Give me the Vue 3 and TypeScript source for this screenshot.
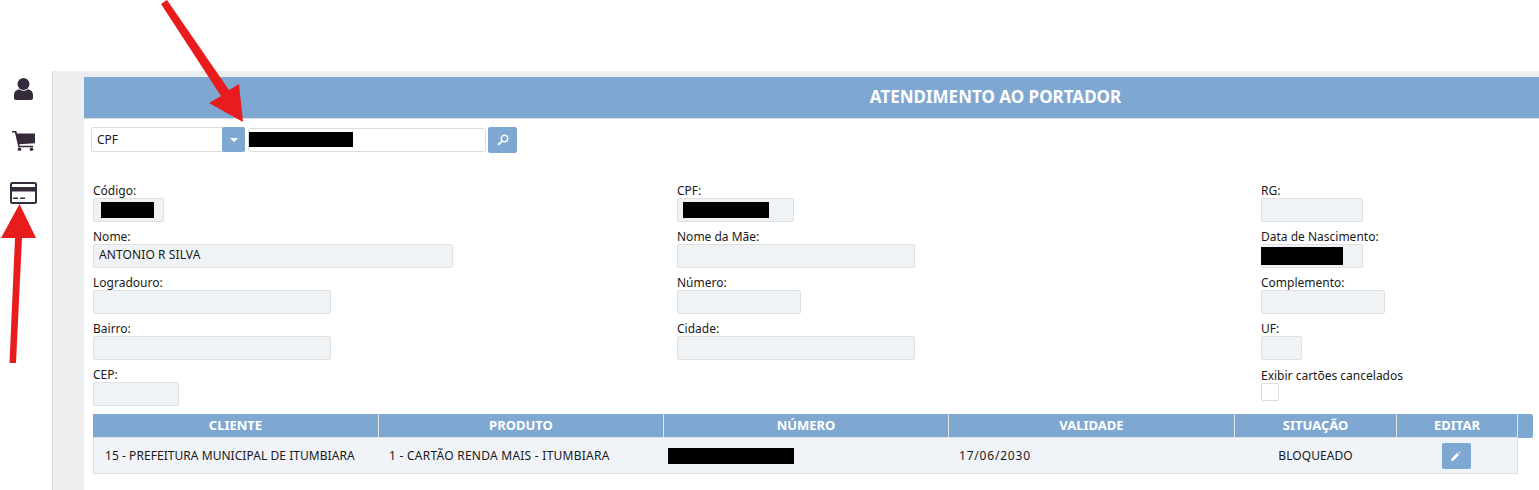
<script setup lang="ts">
interface Field {
  label: string;
  width: number;
  value?: string;
  mask?: number;
  maskLeft?: number;
  maskHeight?: number;
}

const fields: Field[] = [
  { label: 'Código:', width: 71, mask: 53, maskLeft: 2 },
  { label: 'CPF:', width: 117, mask: 86 },
  { label: 'RG:', width: 102 },
  { label: 'Nome:', width: 360, value: 'ANTONIO R SILVA' },
  { label: 'Nome da Mãe:', width: 238 },
  { label: 'Data de Nascimento:', width: 102, mask: 82, maskLeft: -6, maskHeight: 18 },
  { label: 'Logradouro:', width: 238 },
  { label: 'Número:', width: 124 },
  { label: 'Complemento:', width: 124 },
  { label: 'Bairro:', width: 238 },
  { label: 'Cidade:', width: 238 },
  { label: 'UF:', width: 41 },
  { label: 'CEP:', width: 86 },
];

const columns = ['CLIENTE', 'PRODUTO', 'NÚMERO', 'VALIDADE', 'SITUAÇÃO', 'EDITAR'];
</script>

<template>
  <div class="page">
    <aside class="rail">
      <svg class="rail-icon" viewBox="0 0 19 22" width="19" height="22">
        <circle cx="9.500" cy="6" r="6" />
        <path d="M2 22c-1.100 0-2-.9-2-2v-3.500c0-2.600 2.300-4.600 5-5.200 1.200.9 2.800 1.500 4.500 1.500s3.300-.6 4.500-1.500c2.700.6 5 2.600 5 5.200V20c0 1.100-.9 2-2 2z" />
      </svg>
      <svg class="rail-icon" viewBox="0 0 23 20" width="23" height="20">
        <path d="M0 0h4.200l.9 2.400H23v9.800L7.200 13.200l.5 1.500h13.500v1.500H6.400L2.900 1.500H0z" />
        <circle cx="7.500" cy="18.200" r="1.800" />
        <circle cx="19.500" cy="18.200" r="1.800" />
      </svg>
      <svg class="rail-icon card" viewBox="0 0 27 22" width="27" height="22">
        <path fill-rule="evenodd" d="M2.500 0h22A2.500 2.500 0 0 1 27 2.500v17a2.500 2.500 0 0 1-2.500 2.500h-22A2.500 2.500 0 0 1 0 19.500v-17A2.500 2.500 0 0 1 2.500 0zM2 2v3h23V2zM2 9.500V20h23V9.500z" />
        <path d="M3 15.500h5V17H3zM10 15.500h5V17h-5z" />
      </svg>
    </aside>

    <main class="shell">
      <section class="panel">
        <h1 class="title">ATENDIMENTO AO PORTADOR</h1>

        <div class="search">
          <div class="select">
            <span>CPF</span>
            <span class="caret-btn"><i class="caret"></i></span>
          </div>
          <div class="search-input"><span class="mask search-mask"></span></div>
          <button class="btn" type="button" aria-label="Buscar">
            <svg viewBox="0 0 12 12" width="12" height="12" fill="none" stroke="#fff">
              <circle cx="7.500" cy="4.500" r="3.200" stroke-width="1.400" />
              <path d="M5.200 6.800 1.200 10.800" stroke-width="1.800" />
            </svg>
          </button>
        </div>

        <div class="form">
          <div v-for="f in fields" :key="f.label" class="field">
            <label>{{ f.label }}</label>
            <div class="readonly" :style="{ width: `${f.width}px` }">
              <span v-if="f.value" class="value">{{ f.value }}</span>
              <span
                v-if="f.mask"
                class="mask"
                :style="{ width: `${f.mask}px`, marginLeft: `${f.maskLeft ?? 0}px`, height: `${f.maskHeight ?? 16}px` }"
              ></span>
            </div>
          </div>
          <div class="field"></div>
          <div class="field flag">
            <label>Exibir cartões cancelados</label>
            <div class="check"></div>
          </div>
        </div>

        <div class="table-wrap">
          <div class="grid head">
            <div v-for="c in columns" :key="c" class="th">{{ c }}</div>
            <div class="scroll-cap"></div>
          </div>
          <div class="grid row">
            <div class="td">15 - PREFEITURA MUNICIPAL DE ITUMBIARA</div>
            <div class="td product">1 - CARTÃO RENDA MAIS - ITUMBIARA</div>
            <div class="td num"><span class="mask num-mask"></span></div>
            <div class="td date">17/06/2030</div>
            <div class="td center status">BLOQUEADO</div>
            <div class="td center">
              <button class="btn edit" type="button" aria-label="Editar">
                <svg viewBox="0 0 12 12" width="12" height="12" fill="#fff">
                  <path d="M1 11l.6-2.600L7 3l2 2-5.400 5.400z" />
                  <path d="M9.500 1.500l1 1-1 1-1-1z" />
                </svg>
              </button>
            </div>
          </div>
        </div>
      </section>
    </main>

    <svg class="arrows" width="260" height="370" viewBox="0 0 260 370">
      <path d="M161 4 167 0 229 90 239 84 243 122 209 103 221 96z" />
      <path d="M19.500 204 36 238 22 238 16 363 9.500 363 15 238 1 238z" />
    </svg>
  </div>
</template>

<style>
html,
body {
  margin: 0;
  background: #fff;
  overflow: hidden;
}
</style>

<style scoped>
.page {
  position: relative;
  display: flex;
  width: 1539px;
  height: 490px;
  padding-top: 71px;
  box-sizing: border-box;
  overflow: hidden;
  font-family: "Noto Sans", Tahoma, sans-serif;
  font-size: 12px;
  color: #1a1a1a;
}

.rail {
  width: 52px;
  flex: none;
  display: flex;
  flex-direction: column;
  align-items: center;
  padding: 7px 6px 0 0;
  box-sizing: border-box;
}

.rail-icon {
  fill: #352b3b;
  display: block;
  flex: none;
  margin-bottom: 31px;
}

.shell {
  flex: 1;
  background: #edeef0;
  border-left: 1px solid #d9d9d9;
  padding: 6px 0 0 31px;
  min-width: 0;
}

.panel {
  background: #fff;
  height: 100%;
  box-sizing: border-box;
}

.title {
  margin: 0;
  height: 41px;
  padding-left: 368px;
  background: #7ea7d2;
  border-bottom: 1px solid #dcdfe3;
  color: #fff;
  font-size: 17px;
  font-weight: bold;
  line-height: 40px;
  text-align: center;
}

.search {
  display: flex;
  align-items: flex-start;
  padding: 8px 0 0 7px;
}

.select {
  width: 154px;
  height: 25px;
  border: 1px solid #dcdcdc;
  border-radius: 2px;
  box-sizing: border-box;
  display: flex;
  align-items: center;
  justify-content: space-between;
  padding-left: 5px;
}

.caret-btn {
  width: 23px;
  height: 25px;
  margin-right: -1px;
  background: #7ea7d2;
  border-radius: 2px;
  display: flex;
  align-items: center;
  justify-content: center;
}

.caret {
  border: 4px solid transparent;
  border-top: 4px solid #fff;
  border-bottom: 0;
}

.search-input {
  width: 238px;
  height: 24px;
  margin: 1px 2px 0 3px;
  border: 1px solid #dcdcdc;
  border-radius: 2px;
  box-sizing: border-box;
}

.btn {
  width: 29px;
  height: 26px;
  padding: 0;
  background: #7ea7d2;
  border: 0;
  border-radius: 2px;
  display: flex;
  align-items: center;
  justify-content: center;
}

.mask {
  display: inline-block;
  height: 16px;
  background: #000;
}

.search-mask {
  width: 104px;
  height: 15px;
  margin-top: 3px;
  display: block;
}

.form {
  display: grid;
  grid-template-columns: 584px 584px 1fr;
  grid-auto-rows: 38px;
  row-gap: 8px;
  padding: 31px 0 0 9px;
}

.field label {
  display: block;
  height: 14px;
  line-height: 14px;
}

.flag label {
  line-height: 16px;
}

.readonly {
  height: 24px;
  background: #f0f3f6;
  border: 1px solid #e0e0e0;
  border-radius: 2px;
  box-sizing: border-box;
  padding: 0 5px;
  display: flex;
  align-items: center;
}

.value {
  line-height: 20px;
  margin-top: -2px;
  letter-spacing: 0.1px;
}

.check {
  width: 18px;
  height: 18px;
  margin-top: 1px;
  border: 1px solid #dcdcdc;
  border-radius: 2px;
  box-sizing: border-box;
}

.table-wrap {
  margin: 8px 0 0 9px;
  width: 1425px;
}

.grid {
  display: grid;
  grid-template-columns: 286px 285px 285px 286px 162px 121px;
}

.head {
  position: relative;
  height: 23px;
  background: #7ea7d2;
  border-bottom: 1px solid #dcdfe3;
}

.th {
  color: #fff;
  font-size: 13px;
  font-weight: bold;
  line-height: 23px;
  text-align: center;
  border-right: 1px solid #e2e6ea;
  box-sizing: border-box;
}

.scroll-cap {
  position: absolute;
  left: 100%;
  top: 0;
  width: 15px;
  height: 24px;
  background: #7ea7d2;
  border-radius: 0 2px 2px 0;
}

.row {
  height: 36px;
  background: #f0f3f7;
  border: 1px solid #dcdfe3;
  border-top: 0;
  box-sizing: border-box;
}

.td {
  display: flex;
  align-items: center;
  padding-left: 11px;
  white-space: nowrap;
  letter-spacing: 0.05px;
}

.td.product {
  padding-left: 9px;
  letter-spacing: 0.25px;
}

.td.num {
  padding-left: 3px;
}

.td.date {
  padding-left: 9px;
  letter-spacing: 0.8px;
}

.td.center {
  justify-content: center;
  padding-left: 0;
}

.td.status {
  padding-right: 3px;
}

.num-mask {
  width: 126px;
}

.edit {
  margin-left: -5px;
}

.arrows {
  position: absolute;
  left: 0;
  top: 0;
  fill: #e81c1c;
  pointer-events: none;
}
</style>
